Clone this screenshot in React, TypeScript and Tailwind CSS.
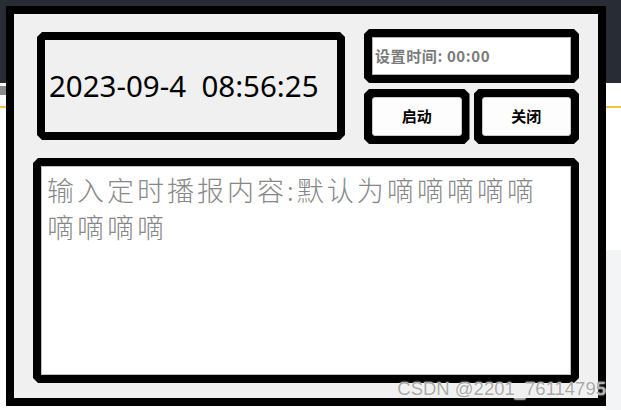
import React from 'react';

const bevel =
    '[clip-path:polygon(5px_0,calc(100%_-_5px)_0,100%_5px,100%_calc(100%_-_5px),calc(100%_-_5px)_100%,5px_100%,0_calc(100%_-_5px),0_5px)]';

const Frame: React.FC<{ className?: string; children?: React.ReactNode }> = ({ className = '', children }) => (
    <div className={`bg-black p-[8px] flex ${bevel} ${className}`}>{children}</div>
);

const ActionButton: React.FC<{ label: string }> = ({ label }) => (
    <Frame className="flex-1">
        <button className="flex-1 rounded-[3px] border border-[#c8c8c8] bg-[#fdfdfd] text-[15px] font-bold text-black [font-family:'Noto_Sans_CJK_SC',sans-serif]">
            {label}
        </button>
    </Frame>
);

export default function App() {
    return (
        <div className="relative w-[621px] h-[410px] overflow-hidden bg-white [font-family:'Noto_Sans','Noto_Sans_CJK_SC',sans-serif]">
            {/* page behind the dialog */}
            <div className="h-[83px] bg-[#282c34]" />
            <div className="mt-[3px] h-[9px] w-[6px] bg-[#8a8a8a]" />
            <div className="mt-[11px] h-[2px] bg-[#f5c242]" />
            <div className="absolute right-0 top-[250px] w-[15px] h-[160px] bg-[#f3f4f6]" />

            {/* dialog */}
            <div className="absolute left-[6px] top-[6px] w-[600px] h-[400px] border-[8px] border-black bg-[#f0f0f0] flex flex-col pl-[19px] pr-[19px] pt-[15px] pb-[15px] gap-[14px]">
                <div className="flex gap-[19px] h-[115px]">
                    <Frame className="ml-[4px] mt-[3px] w-[308px] h-[108px]">
                        <div className="flex-1 flex items-center pl-[4px] bg-[#f0f0f0] text-[29.5px] text-black whitespace-pre [font-family:'Noto_Sans',sans-serif]">
                            2023-09-4  08:56:25
                        </div>
                    </Frame>
                    <div className="w-[215px] flex flex-col gap-[6px]">
                        <Frame className="h-[54px]">
                            <div className="flex-1 flex items-center pl-[2px] bg-white border border-[#b4b4b4] text-[15px] tracking-[0.6px] font-bold text-[#7a7a7a] [font-family:'Noto_Sans_CJK_SC',sans-serif]">
                                设置时间: 00:00
                            </div>
                        </Frame>
                        <div className="flex gap-[4px] h-[55px]">
                            <ActionButton label="启动" />
                            <ActionButton label="关闭" />
                        </div>
                    </div>
                </div>
                <Frame className="flex-1">
                    <textarea
                        readOnly
                        placeholder="输入定时播报内容:默认为嘀嘀嘀嘀嘀嘀嘀嘀嘀"
                        className="flex-1 resize-none bg-white border border-[#c0c0c0] pl-[5px] pr-[20px] pt-[4px] outline-none text-[27px] leading-[37px] tracking-[3px] text-[#808080] placeholder:text-[#878787] [font-family:'Noto_Sans_CJK_SC',sans-serif] font-light"
                    />
                </Frame>
            </div>

            {/* watermark */}
            <div className="absolute right-[15px] bottom-[12px] text-[18.5px] leading-none text-[#a8a8a8] [text-shadow:0_0_1px_#fff,0_0_2px_#fff] [font-family:'Liberation_Sans',sans-serif]">
                CSDN @2201_76114795
            </div>
        </div>
    );
}
